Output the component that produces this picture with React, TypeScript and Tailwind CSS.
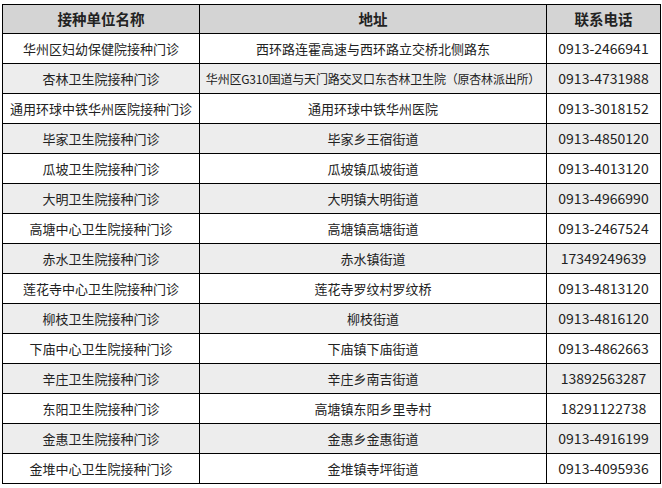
import React from 'react';

type Row = { name: string; addr: string; tel: string; small?: boolean };

const rows: Row[] = [
  { name: '华州区妇幼保健院接种门诊', addr: '西环路连霍高速与西环路立交桥北侧路东', tel: '0913-2466941' },
  { name: '杏林卫生院接种门诊', addr: '华州区G310国道与天门路交叉口东杏林卫生院（原杏林派出所）', tel: '0913-4731988', small: true },
  { name: '通用环球中铁华州医院接种门诊', addr: '通用环球中铁华州医院', tel: '0913-3018152' },
  { name: '毕家卫生院接种门诊', addr: '毕家乡王宿街道', tel: '0913-4850120' },
  { name: '瓜坡卫生院接种门诊', addr: '瓜坡镇瓜坡街道', tel: '0913-4013120' },
  { name: '大明卫生院接种门诊', addr: '大明镇大明街道', tel: '0913-4966990' },
  { name: '高塘中心卫生院接种门诊', addr: '高塘镇高塘街道', tel: '0913-2467524' },
  { name: '赤水卫生院接种门诊', addr: '赤水镇街道', tel: '17349249639' },
  { name: '莲花寺中心卫生院接种门诊', addr: '莲花寺罗纹村罗纹桥', tel: '0913-4813120' },
  { name: '柳枝卫生院接种门诊', addr: '柳枝街道', tel: '0913-4816120' },
  { name: '下庙中心卫生院接种门诊', addr: '下庙镇下庙街道', tel: '0913-4862663' },
  { name: '辛庄卫生院接种门诊', addr: '辛庄乡南吉街道', tel: '13892563287' },
  { name: '东阳卫生院接种门诊', addr: '高塘镇东阳乡里寺村', tel: '18291122738' },
  { name: '金惠卫生院接种门诊', addr: '金惠乡金惠街道', tel: '0913-4916199' },
  { name: '金堆中心卫生院接种门诊', addr: '金堆镇寺坪街道', tel: '0913-4095936' },
];

const cell = 'flex items-center justify-center border-r border-b border-black whitespace-nowrap overflow-hidden';

export default function App() {
  return (
    <div className="w-[662px] h-[488px] bg-white pt-[4px] pl-[2px] text-[#222222] font-['Noto_Sans_CJK_SC','Noto_Sans',sans-serif]">
      <div className="grid grid-cols-[197px_347px_114px] w-[659px] border-l border-t border-black">
        <div className={`${cell} h-[29px] bg-[#d4d4d4] text-[14.5px] font-bold`}>接种单位名称</div>
        <div className={`${cell} h-[29px] bg-[#d4d4d4] text-[14.5px] font-bold`}>地址</div>
        <div className={`${cell} h-[29px] bg-[#d4d4d4] text-[14.5px] font-bold`}>联系电话</div>
        {rows.map((r, i) => {
          const bg = i % 2 === 1 ? 'bg-[#ededed]' : 'bg-white';
          return (
            <React.Fragment key={i}>
              <div className={`${cell} ${bg} h-[30px] text-[13px]`}>{r.name}</div>
              <div className={`${cell} ${bg} h-[30px] ${r.small ? 'text-[12px] tracking-[-0.2px]' : 'text-[13px]'}`}>{r.addr}</div>
              <div className={`${cell} ${bg} h-[30px] text-[14px]`}>{r.tel}</div>
            </React.Fragment>
          );
        })}
      </div>
    </div>
  );
}
